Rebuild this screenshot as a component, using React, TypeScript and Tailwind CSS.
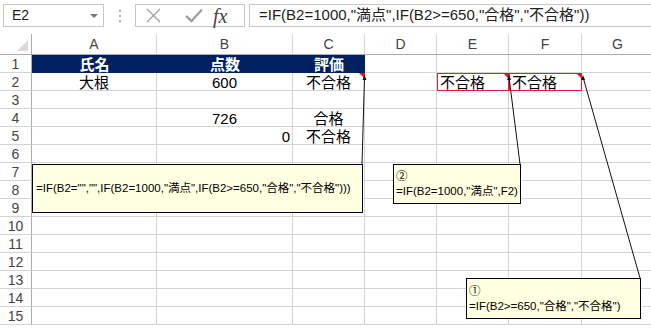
import React from 'react';

type Cell = {
  t?: string;
  align?: 'left' | 'center' | 'right';
  head?: boolean;
  red?: boolean;
  flag?: boolean;
};

const colLetters = ['A', 'B', 'C', 'D', 'E', 'F', 'G'];

const sheet: Record<number, Record<number, Cell>> = {
  1: { 0: { t: '氏名', head: true }, 1: { t: '点数', head: true }, 2: { t: '評価', head: true } },
  2: {
    0: { t: '大根', align: 'center' },
    1: { t: '600', align: 'center' },
    2: { t: '不合格', align: 'center', flag: true },
    4: { t: '不合格', align: 'left', red: true, flag: true },
    5: { t: '不合格', align: 'left', red: true, flag: true },
  },
  4: { 1: { t: '726', align: 'center' }, 2: { t: '合格', align: 'center' } },
  5: { 1: { t: '0', align: 'right' }, 2: { t: '不合格', align: 'center' } },
};

const font = { fontFamily: '"Liberation Sans", "Noto Sans CJK JP", sans-serif' };

const GridCell: React.FC<{ cell?: Cell }> = ({ cell }) => {
  if (cell?.head) {
    return (
      <div className="flex h-[18px] items-center justify-center bg-[#002060] pt-[1px] text-[15px] font-bold leading-none text-white">
        {cell.t}
      </div>
    );
  }
  const align =
    cell?.align === 'center' ? 'justify-center' : cell?.align === 'right' ? 'justify-end pr-[2px]' : 'justify-start pl-[3px]';
  return (
    <div
      className={`relative flex h-[18px] items-center border-r border-b pt-[1px] text-[15px] leading-none text-black ${align} ${
        cell?.red ? 'border-[#e0202f] shadow-[inset_1px_1px_0_0_#e0202f]' : 'border-[#d4d4d4]'
      }`}
    >
      {cell?.t}
      {cell?.flag && (
        <span className="absolute top-0 right-[-1px] h-0 w-0 border-t-[6px] border-l-[6px] border-t-[#e0102a] border-l-transparent" />
      )}
    </div>
  );
};

export default function App() {
  const rows = Array.from({ length: 15 }, (_, i) => i + 1);

  return (
    <div className="relative h-[328px] w-[651px] overflow-hidden bg-white" style={font}>
      {/* formula bar */}
      <div className="flex h-[34px] items-start pt-[4px] pl-[3px]">
        <div className="flex h-[23px] w-[101px] items-center justify-between border border-[#c6c6c6] pr-[5px] pl-[8px] text-[14px] text-[#222]">
          <span>E2</span>
          <span className="h-0 w-0 border-t-[4px] border-r-[4px] border-l-[4px] border-t-[#777] border-r-transparent border-l-transparent" />
        </div>
        <div className="flex h-[23px] w-[31px] flex-col items-center justify-center gap-[3px]">
          <span className="h-[2px] w-[2px] bg-[#b0b0b0]" />
          <span className="h-[2px] w-[2px] bg-[#b0b0b0]" />
          <span className="h-[2px] w-[2px] bg-[#b0b0b0]" />
        </div>
        <div className="flex h-[23px] w-[110px] items-center border border-[#c6c6c6]">
          <svg width="15" height="15" viewBox="0 0 15 15" className="ml-[10px]">
            <path d="M1 1 L14 14 M14 1 L1 14" stroke="#a0a0a0" strokeWidth="1.3" fill="none" />
          </svg>
          <svg width="18" height="15" viewBox="0 0 18 15" className="ml-[24px]">
            <path d="M1 8 L6.5 13 L17 1.5" stroke="#a0a0a0" strokeWidth="2.4" fill="none" />
          </svg>
          <span
            className="ml-[10px] text-[20px] leading-none text-[#444] italic"
            style={{ fontFamily: '"Liberation Serif", serif' }}
          >
            fx
          </span>
        </div>
        <div className="ml-[4px] flex h-[23px] flex-1 items-center border border-r-0 border-[#c6c6c6] pl-[9px] text-[15px] whitespace-nowrap text-[#222]">
          =IF(B2=1000,"満点",IF(B2&gt;=650,"合格","不合格"))
        </div>
      </div>

      {/* column headers */}
      <div className="grid h-[21px] grid-cols-[32px_125px_136px_72px_72px_72px_73px_72px] border-b border-[#ababab]">
        <div className="relative border-r border-[#ababab]">
          <span className="absolute right-[3px] bottom-[3px] h-0 w-0 border-b-[11px] border-l-[11px] border-b-[#dadada] border-l-transparent" />
        </div>
        {colLetters.map((c) => (
          <div
            key={c}
            className="flex items-center justify-center border-r border-[#d4d4d4] text-[14px] leading-none text-[#444]"
          >
            {c}
          </div>
        ))}
      </div>

      {/* rows */}
      {rows.map((r) => (
        <div key={r} className="grid grid-cols-[32px_125px_136px_72px_72px_72px_73px_72px]">
          <div className="flex h-[18px] items-center justify-center border-r border-b border-r-[#ababab] border-b-[#d4d4d4] text-[14px] leading-none text-[#444]">
            {r}
          </div>
          {colLetters.map((_, ci) => (
            <GridCell key={ci} cell={sheet[r]?.[ci]} />
          ))}
        </div>
      ))}

      {/* comment arrows */}
      <svg className="pointer-events-none absolute top-0 left-0" width="651" height="328">
        <line x1="364.5" y1="77" x2="362" y2="164" stroke="#111" strokeWidth="1" />
        <line x1="509" y1="77" x2="520" y2="164" stroke="#111" strokeWidth="1" />
        <line x1="583" y1="77" x2="640" y2="278" stroke="#111" strokeWidth="1" />
        <polygon points="364.5,75 362.5,80 366.5,80" fill="#111" />
        <polygon points="509,75 507,80 511,80" fill="#111" />
        <polygon points="583,75 581,80 585,80" fill="#111" />
      </svg>

      {/* comments */}
      <div className="absolute top-[164px] left-[32px] flex h-[49px] w-[331px] items-center border border-black bg-[#ffffe1] pl-[3px] text-[11.5px] whitespace-nowrap text-black">
        =IF(B2="","",IF(B2=1000,"満点",IF(B2&gt;=650,"合格","不合格")))
      </div>
      <div className="absolute top-[164px] left-[393px] flex h-[40px] w-[128px] flex-col justify-center border border-black bg-[#ffffe1] pl-[2px] text-[11.5px] leading-[15px] whitespace-nowrap text-black">
        <span>②</span>
        <span>=IF(B2=1000,"満点",F2)</span>
      </div>
      <div className="absolute top-[278px] left-[466px] flex h-[41px] w-[175px] flex-col justify-center border border-black bg-[#ffffe1] pl-[2px] text-[11.5px] leading-[15px] whitespace-nowrap text-black">
        <span>①</span>
        <span>=IF(B2&gt;=650,"合格","不合格")</span>
      </div>
    </div>
  );
}
